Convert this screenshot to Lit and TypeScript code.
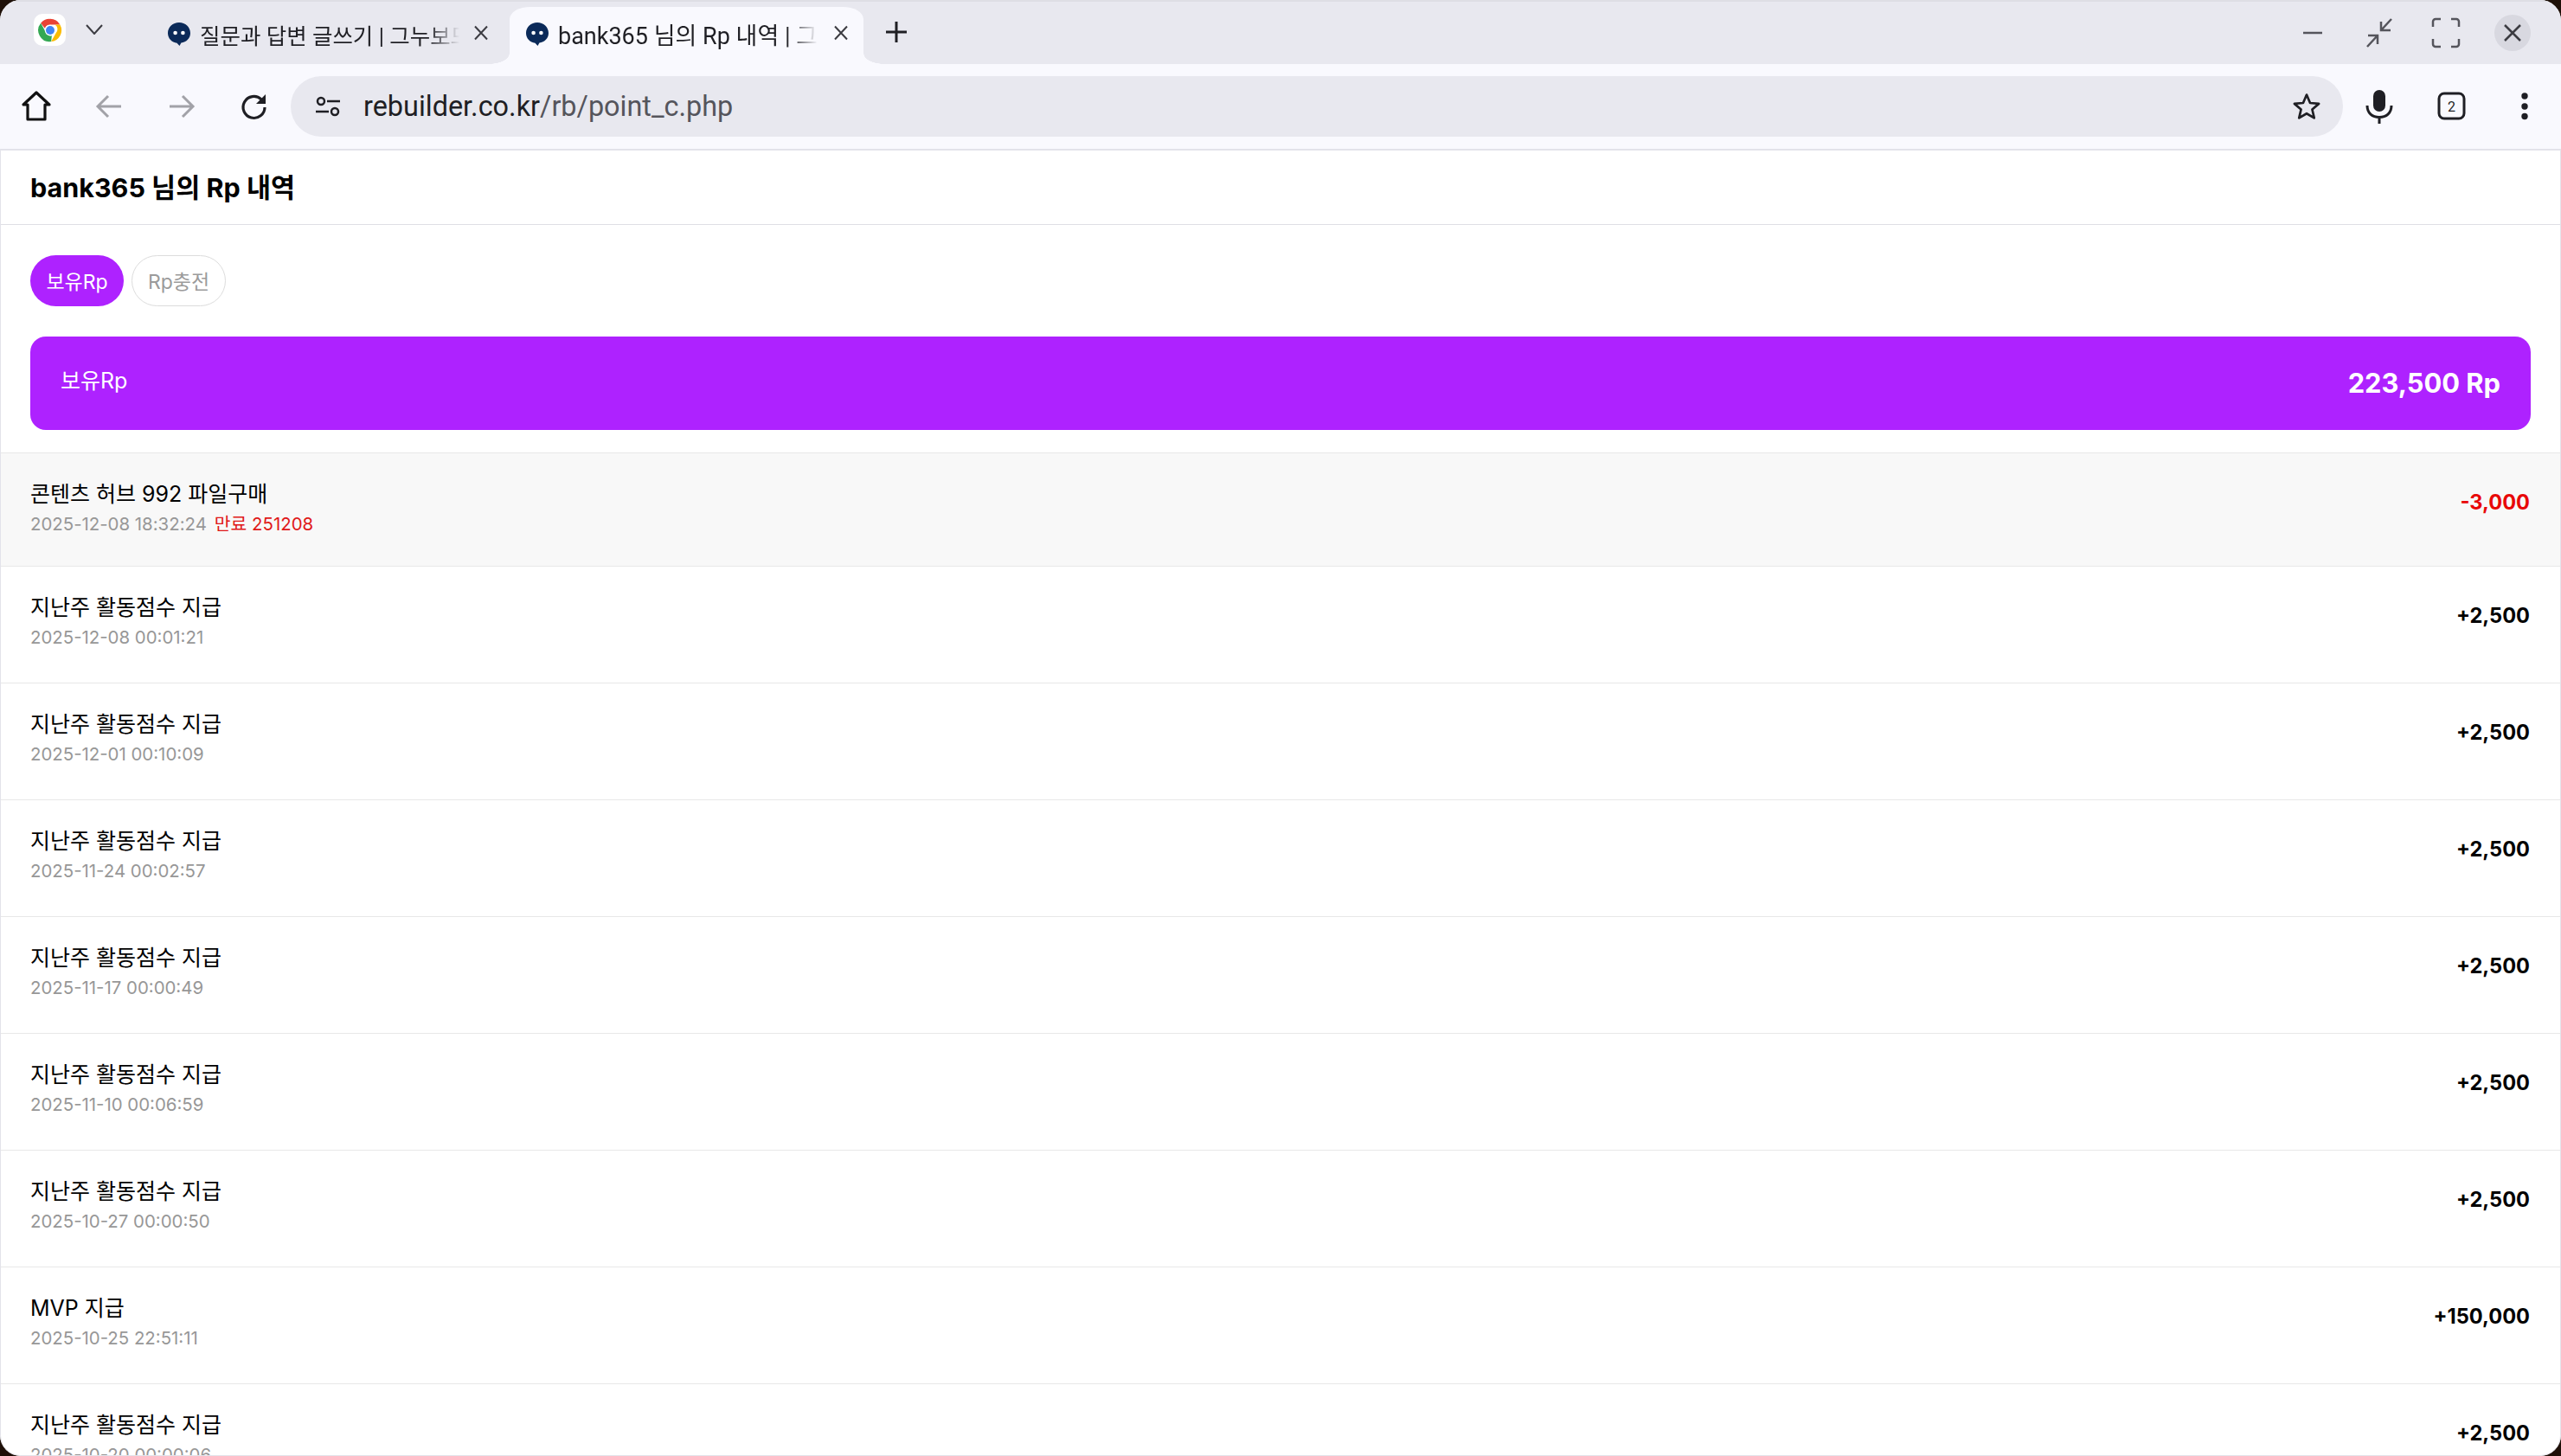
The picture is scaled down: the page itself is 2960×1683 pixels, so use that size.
import { LitElement, html, css } from "lit";
import { customElement } from "lit/decorators.js";

const favicon = html`<svg class="fav" viewBox="0 0 26 27">
  <path d="M13 0C5.800 0 0 5.300 0 12.300c0 6.300 4.600 10.700 10.500 11.400L13.500 27l1.900-3.400C21.500 22.600 26 18.400 26 12.300 26 5.300 20.200 0 13 0z" fill="#0b2a59"/>
  <circle cx="8.600" cy="12" r="2.300" fill="#fff"/><circle cx="17.400" cy="12" r="2.300" fill="#fff"/>
</svg>`;

const closeX = html`<svg class="tabx" viewBox="0 0 20 20"><path d="M3 2.500 17 17.500M17 2.500 3 17.500" fill="none" stroke="#3c3c42" stroke-width="2"/></svg>`;

type Row = { t: string; d: string; a: string; exp?: string };
const ROWS: Row[] = [
  { t: "콘텐츠 허브 992 파일구매", d: "2025-12-08 18:32:24", a: "-3,000", exp: "만료 251208" },
  { t: "지난주 활동점수 지급", d: "2025-12-08 00:01:21", a: "+2,500" },
  { t: "지난주 활동점수 지급", d: "2025-12-01 00:10:09", a: "+2,500" },
  { t: "지난주 활동점수 지급", d: "2025-11-24 00:02:57", a: "+2,500" },
  { t: "지난주 활동점수 지급", d: "2025-11-17 00:00:49", a: "+2,500" },
  { t: "지난주 활동점수 지급", d: "2025-11-10 00:06:59", a: "+2,500" },
  { t: "지난주 활동점수 지급", d: "2025-10-27 00:00:50", a: "+2,500" },
  { t: "MVP 지급", d: "2025-10-25 22:51:11", a: "+150,000" },
  { t: "지난주 활동점수 지급", d: "2025-10-20 00:00:06", a: "+2,500" },
];

@customElement("app-root")
export class AppRoot extends LitElement {
  static styles = css`
    :host {
      display: block;
      width: 2960px;
      height: 1683px;
      overflow: hidden;
      background: #1e1008;
      font-family: Inter, "Noto Sans CJK KR", sans-serif;
      color: #000;
    }
    .window {
      height: 1683px;
      border-radius: 24px;
      overflow: hidden;
      display: flex;
      flex-direction: column;
      background: #fff;
    }
    .strip {
      height: 74px;
      flex: none;
      background: #e8e8ef;
      display: flex;
      align-items: flex-end;
      position: relative;
      box-sizing: border-box;
      border-top: 2px solid #dedee4;
    }
    .chrome-tile {
      width: 37px;
      height: 37px;
      margin: 0 0 21px 39px;
      background: #fff;
      border-radius: 10px;
      display: flex;
      align-items: center;
      justify-content: center;
      flex: none;
    }
    .chrome-tile svg { width: 30px; height: 30px; }
    .chev { width: 20px; height: 12px; margin: 0 0 34px 23px; flex: none; }
    .tab {
      display: flex;
      align-items: center;
      height: 66px;
      box-sizing: border-box;
      font-family: Roboto, "Noto Sans CJK KR", sans-serif;
      font-size: 27px;
      color: #1f1f24;
      flex: none;
      position: relative;
    }
    .tab.a { width: 413px; margin-left: 57px; padding: 0 0 3px 18px; font-size: 25.500px; }
    .tab.b {
      width: 409px;
      padding: 0 0 3px 19px;
      background: #f9f9fe;
      border-radius: 24px 24px 0 0 / 14px 14px 0 0;
    }
    .tab.b::before,
    .tab.b::after {
      content: "";
      position: absolute;
      bottom: 0;
      width: 24px;
      height: 12px;
    }
    .tab.b::before {
      left: -24px;
      background: radial-gradient(ellipse 24px 12px at 0 0, transparent 97%, #f9f9fe 100%);
    }
    .tab.b::after {
      right: -24px;
      background: radial-gradient(ellipse 24px 12px at 100% 0, transparent 97%, #f9f9fe 100%);
    }
    .fav { width: 26px; height: 27px; flex: none; }
    .tab-text {
      margin-left: 11px;
      width: 300px;
      white-space: nowrap;
      overflow: hidden;
      flex: none;
      -webkit-mask-image: linear-gradient(90deg, #000 88%, transparent 100%);
      mask-image: linear-gradient(90deg, #000 88%, transparent 100%);
    }
    .tabx { width: 20px; height: 20px; margin-left: 17px; flex: none; margin-top: -4px; }
    .tab.a .tabx { margin-left: 15px; }
    .plus { width: 26px; height: 26px; margin: 0 0 24px 25px; flex: none; }
    .winctl {
      margin-left: auto;
      display: flex;
      align-items: center;
      height: 72px;
      padding-right: 35px;
      gap: 35px;
    }
    .winctl svg { width: 42px; height: 42px; display: block; }
    .winclose {
      width: 42px;
      height: 42px;
      border-radius: 50%;
      background: #d8d8e0;
    }
    .toolbar {
      height: 98px;
      flex: none;
      background: #f9f9fe;
      border-bottom: 2px solid #e3e3ea;
      box-sizing: content-box;
      display: flex;
      align-items: center;
    }
    .nav {
      display: flex;
      align-items: center;
      justify-content: center;
      width: 84px;
      flex: none;
    }
    .nav svg { width: 40px; height: 40px; display: block; }
    .navs { display: flex; flex: none; }
    .omni {
      width: 2372px;
      height: 70px;
      background: #e8e8ef;
      border-radius: 35px;
      display: flex;
      align-items: center;
      flex: none;
      box-sizing: border-box;
      padding: 0 25px 0 26px;
    }
    .omni .tune { width: 34px; height: 34px; flex: none; }
    .url {
      font-family: Roboto, sans-serif;
      font-size: 32.400px;
      margin-left: 24px;
      color: #55555c;
      white-space: nowrap;
    }
    .url b { font-weight: 400; color: #1f1f24; }
    .star { width: 34px; height: 34px; margin-left: auto; flex: none; }
    .tools { display: flex; flex: none; }
    .tools .nav svg { width: 44px; height: 44px; }
    .page {
      flex: 1;
      min-height: 0;
      overflow: hidden;
      background: #fff;
      border-left: 1px solid #e3e3ea;
      border-right: 1px solid #e3e3ea;
      border-bottom: 1px solid #e3e3ea;
      border-radius: 0 0 24px 24px;
    }
    .head {
      height: 86px;
      box-sizing: border-box;
      border-bottom: 1px solid #dfdfe5;
      display: flex;
      align-items: center;
      padding: 0 0 3px 34px;
      font-size: 30.500px;
      font-weight: 700;
    }
    .pills {
      display: flex;
      gap: 9px;
      padding: 35px 0 0 34px;
    }
    .pill {
      height: 59px;
      box-sizing: border-box;
      width: 109px;
      padding-bottom: 2px;
      border-radius: 30px;
      display: flex;
      align-items: center;
      justify-content: center;
      font-size: 23px;
      white-space: nowrap;
    }
    .pill.on { background: #ae22ff; color: #fff; width: 108px; }
    .pill.off { border: 1px solid #dcdcdc; color: #9b9b9b; background: #fff; }
    .card {
      margin: 35px 34px 26px 34px;
      height: 108px;
      background: #ae22ff;
      border-radius: 18px;
      color: #fff;
      display: flex;
      justify-content: space-between;
      box-sizing: border-box;
      padding: 0 35px 0 35px;
    }
    .card .lbl { font-size: 25px; padding-top: 32px; line-height: 38px; }
    .card .val { font-size: 30.800px; font-weight: 700; line-height: 40px; padding-top: 34px; }
    .row {
      border-top: 1px solid #e8e8e8;
      box-sizing: border-box;
      height: 135px;
      display: flex;
      justify-content: space-between;
      padding: 27px 35px 0 34px;
    }
    .row.first { height: 131px; background: #f8f8f8; }
    .t { font-size: 25px; line-height: 40px; }
    .d { font-size: 20.400px; line-height: 28px; margin-top: 1px; color: #979797; }
    .d span { color: #e01818; margin-left: 9px; }
    .amt { font-size: 23.600px; font-weight: 700; line-height: 34px; margin-top: 13px; }
    .amt.neg { color: #e80808; }
  `;

  render() {
    return html`<div class="window">
      <div class="strip">
        <div class="chrome-tile">
          <svg viewBox="0 0 48 48">
            <path d="M24 3a21 21 0 0 1 18.200 10.500H24a10.500 10.500 0 0 0-9.800 6.800L6.600 10.900A21 21 0 0 1 24 3z" fill="#ea4335"/>
            <path d="M42.200 13.500A21 21 0 0 1 25.800 44.900l8.600-15.400A10.500 10.500 0 0 0 33 13.500z" fill="#fbbc04"/>
            <path d="M6.600 10.900 15 25.800a10.500 10.500 0 0 0 12 8.300l-1.200 10.800A21 21 0 0 1 6.600 10.900z" fill="#34a853"/>
            <circle cx="24" cy="24" r="10" fill="#fff"/>
            <circle cx="24" cy="24" r="8" fill="#4285f4"/>
          </svg>
        </div>
        <svg class="chev" viewBox="0 0 20 12"><path d="M1 1l9 10 9-10" fill="none" stroke="#3c3c42" stroke-width="2"/></svg>
        <div class="tab a">${favicon}<span class="tab-text">질문과 답변 글쓰기 | 그누보드</span>${closeX}</div>
        <div class="tab b">${favicon}<span class="tab-text">bank365 님의 Rp 내역 | 그누보드</span>${closeX}</div>
        <svg class="plus" viewBox="0 0 26 26"><path d="M13 1v24M1 13h24" fill="none" stroke="#1f1f24" stroke-width="3"/></svg>
        <div class="winctl">
          <svg viewBox="0 0 42 42"><path d="M10 21h22" stroke="#55555c" stroke-width="2.500" fill="none"/></svg>
          <svg viewBox="0 0 42 42" stroke="#55555c" stroke-width="2.500" fill="none"><path d="M35 5 23 18M23 8v10h11M7 37l12-13M19 34V24H8"/></svg>
          <svg viewBox="0 0 42 42" stroke="#55555c" stroke-width="2.500" fill="none"><path d="M6 14V8a3 3 0 0 1 3-3h6M27 5h6a3 3 0 0 1 3 3v6M36 28v6a3 3 0 0 1-3 3h-6M15 37H9a3 3 0 0 1-3-3v-6"/></svg>
          <div class="winclose"><svg viewBox="0 0 42 42" stroke="#3c3c42" stroke-width="2.500" fill="none"><path d="M12 12l18 18M30 12 12 30"/></svg></div>
        </div>
      </div>
      <div class="toolbar">
        <div class="navs">
          <div class="nav"><svg viewBox="0 0 40 40"><path d="M20 4 5 18h5v17h20V18h5z" fill="none" stroke="#111" stroke-width="3.200" stroke-linejoin="round"/></svg></div>
          <div class="nav"><svg viewBox="0 0 40 40"><path d="M34 20H8M19 8 7 20l12 12" fill="none" stroke="#a2a2a8" stroke-width="3"/></svg></div>
          <div class="nav"><svg viewBox="0 0 40 40"><path d="M6 20h26M21 8l12 12-12 12" fill="none" stroke="#a2a2a8" stroke-width="3"/></svg></div>
          <div class="nav"><svg viewBox="0 0 40 40"><path d="M32 21a12.500 12.500 0 1 1-4-9.200L32 16" fill="none" stroke="#1f1f24" stroke-width="3.200"/><path d="M33 6v11H22z" fill="#1f1f24"/></svg></div>
        </div>
        <div class="omni">
          <svg class="tune" viewBox="0 0 34 34" fill="none" stroke="#1f1f24" stroke-width="2.500"><circle cx="9" cy="11" r="4"/><path d="M16 11h15M3 23h15"/><circle cx="25" cy="23" r="4"/></svg>
          <span class="url"><b>rebuilder.co.kr</b>/rb/point_c.php</span>
          <svg class="star" viewBox="0 0 38 38"><path d="M19 4l4.500 10.500 11.300 1-8.600 7.400 2.600 11.100L19 28.200 9.200 34l2.600-11.100-8.600-7.400 11.300-1z" fill="none" stroke="#1f1f24" stroke-width="3" stroke-linejoin="round"/></svg>
        </div>
        <div class="tools">
          <div class="nav"><svg viewBox="0 0 44 44"><rect x="15" y="3" width="14" height="25" rx="7" fill="#1f1f24"/><path d="M8 21c0 9 6 13.500 14 13.500S36 30 36 21M22 34v8" fill="none" stroke="#1f1f24" stroke-width="3"/></svg></div>
          <div class="nav"><svg viewBox="0 0 44 44"><rect x="7" y="7" width="29" height="29" rx="6" fill="none" stroke="#1f1f24" stroke-width="3"/><text x="21.500" y="27.500" font-size="16" font-family="Roboto, sans-serif" text-anchor="middle" fill="#1f1f24">2</text></svg></div>
          <div class="nav"><svg viewBox="0 0 44 44" fill="#1f1f24"><circle cx="22" cy="10" r="3.700"/><circle cx="22" cy="22" r="3.700"/><circle cx="22" cy="33.500" r="3.700"/></svg></div>
        </div>
      </div>
      <div class="page">
        <div class="head">bank365 님의 Rp 내역</div>
        <div class="pills"><div class="pill on">보유Rp</div><div class="pill off">Rp충전</div></div>
        <div class="card"><div class="lbl">보유Rp</div><div class="val">223,500 Rp</div></div>
        ${ROWS.map(
          (r, i) => html`<div class="row ${i === 0 ? "first" : ""}">
            <div>
              <div class="t">${r.t}</div>
              <div class="d">${r.d}${r.exp ? html`<span>${r.exp}</span>` : ""}</div>
            </div>
            <div class="amt ${r.a.startsWith("-") ? "neg" : ""}">${r.a}</div>
          </div>`
        )}
      </div>
    </div>`;
  }
}
